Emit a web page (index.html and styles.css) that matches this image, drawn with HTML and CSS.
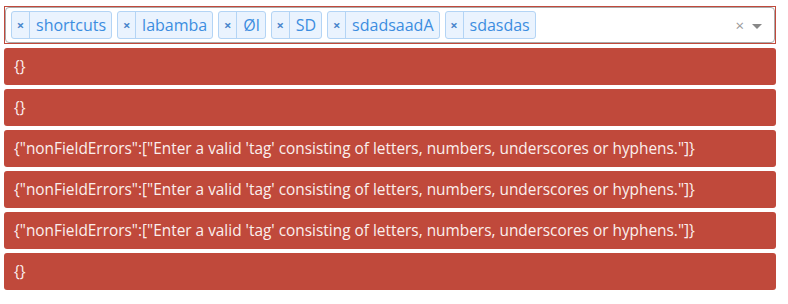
FILE: index.html
```html
<!DOCTYPE html>
<html>
<head>
<meta charset="utf-8">
<link rel="stylesheet" href="styles.css">
</head>
<body>
<div class="page">
  <div class="field">
    <div class="select">
      <ul class="chips">
        <li class="chip"><span class="chip-x">×</span><span class="chip-label">shortcuts</span></li>
        <li class="chip"><span class="chip-x">×</span><span class="chip-label">labamba</span></li>
        <li class="chip"><span class="chip-x">×</span><span class="chip-label">Øl</span></li>
        <li class="chip"><span class="chip-x">×</span><span class="chip-label">SD</span></li>
        <li class="chip"><span class="chip-x">×</span><span class="chip-label">sdadsaadA</span></li>
        <li class="chip"><span class="chip-x">×</span><span class="chip-label">sdasdas</span></li>
      </ul>
      <span class="clear">×</span>
      <span class="arrow"></span>
    </div>
  </div>
  <div class="alert">{}</div>
  <div class="alert">{}</div>
  <div class="alert">{"nonFieldErrors":["Enter a valid 'tag' consisting of letters, numbers, underscores or hyphens."]}</div>
  <div class="alert">{"nonFieldErrors":["Enter a valid 'tag' consisting of letters, numbers, underscores or hyphens."]}</div>
  <div class="alert">{"nonFieldErrors":["Enter a valid 'tag' consisting of letters, numbers, underscores or hyphens."]}</div>
  <div class="alert">{}</div>
</div>
</body>
</html>
```

FILE: styles.css
```css
html, body {
  margin: 0;
  padding: 0;
  background: #ffffff;
}
body {
  font-family: "Open Sans", "Lato", sans-serif;
}
.page {
  width: 772px;
  padding: 6px 0 0 4px;
  display: flex;
  flex-direction: column;
  gap: 4px;
}
.field {
  border: 1px solid #c0493b;
  box-sizing: border-box;
  height: 38px;
}
.select {
  height: 100%;
  box-sizing: border-box;
  border: 1px solid #aaaaaa;
  border-radius: 4px;
  background: #fff;
  display: flex;
  align-items: center;
  padding: 0 12px 0 5px;
}
.chips {
  list-style: none;
  margin: 0;
  padding: 0;
  display: flex;
  gap: 5px;
  flex: 1;
}
.chip {
  display: flex;
  align-items: stretch;
  height: 28px;
  box-sizing: border-box;
  border: 1px solid #b3d4f5;
  border-radius: 3px;
  background: #eaf3fe;
  color: #3c8de0;
  font-size: 16px;
}
.chip-x {
  width: 17px;
  display: flex;
  align-items: center;
  justify-content: center;
  border-right: 1px solid #b3d4f5;
  font-size: 13px;
  font-weight: 700;
  color: #4a86cc;
}
.chip-label {
  display: flex;
  align-items: center;
  padding: 0 5px 1px 6px;
}
.clear {
  color: #999;
  font-size: 15px;
  margin-right: 8px;
}
.arrow {
  width: 0;
  height: 0;
  border-left: 5px solid transparent;
  border-right: 5px solid transparent;
  border-top: 5px solid #888;
  margin-top: 2px;
}
.alert {
  height: 37px;
  box-sizing: border-box;
  background: #c0493b;
  border-radius: 3px;
  color: #fbefed;
  font-size: 15.4px;
  display: flex;
  align-items: center;
  padding: 0 10px;
}
```
